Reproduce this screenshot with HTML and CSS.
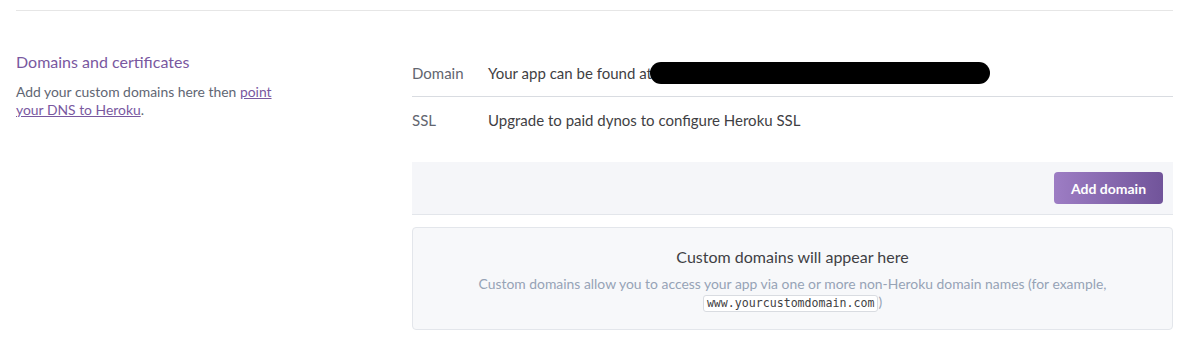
FILE: index.html
```html
<!DOCTYPE html>
<html>
<head>
	<meta charset="utf-8">
	<title>Domains and certificates</title>
	<link rel="stylesheet" href="styles.css">
</head>
<body>
	<div class="page">
		<div class="section">
			<div class="aside">
				<h3>Domains and certificates</h3>
				<p>Add your custom domains here then <a href="javascript:">point your DNS to Heroku</a>.</p>
			</div>
			<div class="main">
				<ul class="info">
					<li>
						<span class="label">Domain</span>
						<span class="value">Your app can be found at<span class="redact"></span></span>
					</li>
					<li>
						<span class="label">SSL</span>
						<span class="value">Upgrade to paid dynos to configure Heroku SSL</span>
					</li>
				</ul>
				<div class="toolbar">
					<button class="btn" type="button">Add domain</button>
				</div>
				<div class="empty">
					<h4>Custom domains will appear here</h4>
					<p>Custom domains allow you to access your app via one or more non-Heroku domain names (for example, <code>www.yourcustomdomain.com</code>)</p>
				</div>
			</div>
		</div>
	</div>
</body>
</html>
```

FILE: styles.css
```css
*{
	margin: 0;
	padding: 0;
	box-sizing: border-box;
}
body{
	background: #fff;
	font-family: Lato, "Open Sans", sans-serif;
	color: #3f3f44;
}
.page{
	padding: 0 15px 0 16px;
}
.section{
	display: flex;
	margin-top: 10px;
	padding-top: 40px;
	border-top: 1px solid #e6e6e6;
}
.aside{
	width: 396px;
	flex: none;
	padding-top: 1px;
}
.aside h3{
	font-weight: normal;
	font-size: 16px;
	line-height: 20px;
	color: #79589f;
}
.aside p{
	margin-top: 11px;
	width: 264px;
	font-size: 13.9px;
	line-height: 18px;
	color: #5f6673;
}
.aside a{
	color: #79589f;
	text-decoration: underline;
}
.main{
	flex: 1;
}
.info{
	list-style: none;
}
.info li{
	display: flex;
	height: 45px;
	padding-top: 12px;
	font-size: 15px;
	line-height: 20px;
}
.info li + li{
	height: 47px;
	border-top: 1px solid #d9dce1;
	padding-top: 13px;
}
.label{
	width: 76px;
	color: #62656f;
}
.value{
	color: #3f3f44;
	display: flex;
	align-items: center;
	height: 20px;
}
.redact{
	display: inline-block;
	width: 340px;
	height: 22px;
	margin-left: -2px;
	background: #000;
	border-radius: 11px;
}
.toolbar{
	display: flex;
	justify-content: flex-end;
	margin-top: 19px;
	padding: 10px;
	background: #f5f6f9;
	border-bottom: 1px solid #e3e6eb;
}
.btn{
	width: 109px;
	height: 32px;
	border: none;
	border-radius: 4px;
	background: linear-gradient(to right, #9d7dc4, #71549a);
	color: #fff;
	font-family: Lato, sans-serif;
	font-weight: bold;
	font-size: 14px;
	cursor: pointer;
}
.empty{
	margin-top: 12px;
	padding: 19px 20px 17px;
	background: #f7f8fa;
	border: 1px solid #e3e6eb;
	border-radius: 4px;
	text-align: center;
}
.empty h4{
	font-weight: normal;
	font-size: 16px;
	line-height: 20px;
	color: #3f3f44;
}
.empty p{
	margin-top: 8px;
	font-size: 13.9px;
	line-height: 18px;
	color: #96a3b6;
}
.empty code{
	display: inline-block;
	padding: 0 3px;
	font-family: "DejaVu Sans Mono", monospace;
	font-size: 11.6px;
	line-height: 15px;
	color: #3f3f44;
	background: #fff;
	border: 1px solid #d9dce1;
	border-radius: 3px;
}
```
